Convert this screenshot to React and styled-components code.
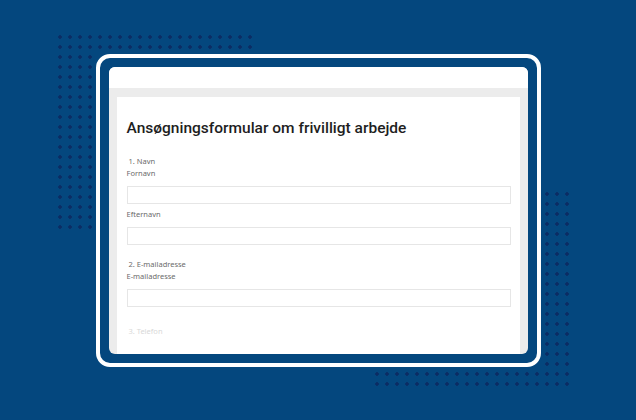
import React from 'react';
import styled, { createGlobalStyle } from 'styled-components';

const GlobalStyle = createGlobalStyle`
	html, body {
		margin: 0;
		padding: 0;
		background: #04477e;
	}
	* { box-sizing: border-box; }
`

const Page = styled.div`
	position: relative;
	width: 636px;
	height: 420px;
	overflow: hidden;
	background: #04477e;
	display: flex;
	align-items: center;
	justify-content: center;
	font-family: "Noto Sans", "Liberation Sans", sans-serif;
`
// decorative dot grids sit behind the frame
const Dots = styled.div`
	position: absolute;
	left: ${props => props.x}px;
	top: ${props => props.y}px;
	width: ${props => props.cols * 10}px;
	height: ${props => props.rows * 10}px;
	background-image: radial-gradient(circle at 5px 5px, #0b2c64 1.5px, transparent 2px);
	background-size: 10px 10px;
`
const Frame = styled.div`
	position: relative;
	width: 445px;
	height: 313px;
	border: 4px solid #fff;
	border-radius: 14px;
	padding: 9px;
	background: #04477e;
`
const Window = styled.div`
	width: 100%;
	height: 100%;
	background: #ececec;
	border-radius: 6px;
	overflow: hidden;
	display: flex;
	flex-direction: column;
`
const TopBar = styled.div`
	height: 21px;
	background: #fff;
	flex-shrink: 0;
`
const Body = styled.div`
	flex: 1;
	padding: 9px 8px 0 8px;
	display: flex;
`
const Sheet = styled.div`
	flex: 1;
	background: #fff;
	padding: 21px 8px 0 10px;
	overflow: hidden;
`
const Title = styled.h1`
	margin: 0 0 18px 0;
	font-family: Roboto, "Noto Sans", sans-serif;
	font-size: 15.5px;
	line-height: 20px;
	font-weight: 500;
	color: #1e1e1e;
`
const Question = styled.div`
	margin-bottom: ${props => props.gap || 14}px;
`
const QLabel = styled.div`
	font-size: 7.5px;
	line-height: 10px;
	padding-left: 2px;
	color: ${props => props.faded ? '#d8d8d8' : '#6b6b6b'};
`
const FieldLabel = styled.div`
	font-size: 7.5px;
	line-height: 10px;
	margin-top: 2px;
	color: #6b6b6b;
`
const Input = styled.div`
	margin-top: 8px;
	margin-bottom: 5px;
	width: 384px;
	height: 18px;
	border: 1px solid #e6e6e6;
	background: #fff;
`

export default function App() {
	return (
		<Page>
			<GlobalStyle />
			<Dots x={55} y={32} cols={20} rows={2} />
			<Dots x={55} y={52} cols={4} rows={18} />
			<Dots x={542} y={189} cols={3} rows={18} />
			<Dots x={372} y={369} cols={20} rows={2} />
			<Frame>
				<Window>
					<TopBar />
					<Body>
						<Sheet>
							<Title>Ansøgningsformular om frivilligt arbejde</Title>
							<Question gap={14}>
								<QLabel>1. Navn</QLabel>
								<FieldLabel>Fornavn</FieldLabel>
								<Input />
								<FieldLabel>Efternavn</FieldLabel>
								<Input />
							</Question>
							<Question gap={19}>
								<QLabel>2. E-mailadresse</QLabel>
								<FieldLabel>E-mailadresse</FieldLabel>
								<Input />
							</Question>
							<Question>
								<QLabel faded>3. Telefon</QLabel>
							</Question>
						</Sheet>
					</Body>
				</Window>
			</Frame>
		</Page>
	)
}
